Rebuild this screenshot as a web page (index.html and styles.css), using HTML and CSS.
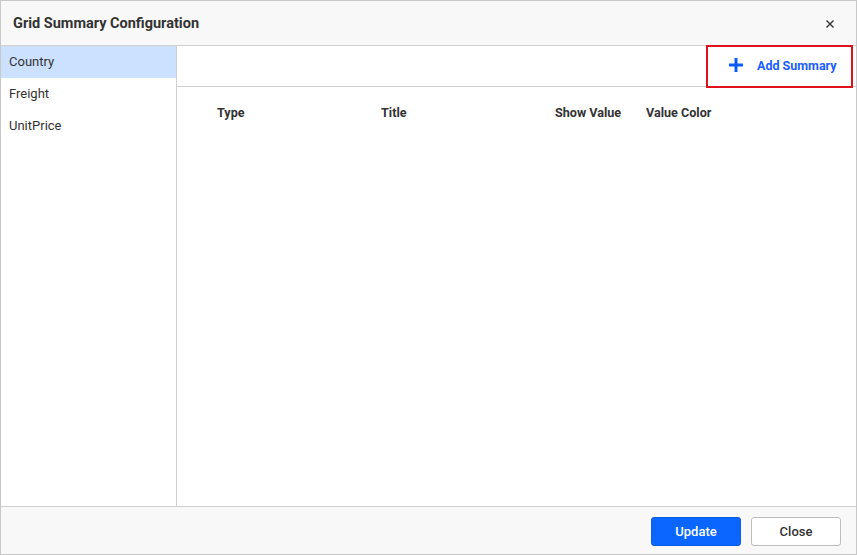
FILE: index.html
```html
<!DOCTYPE html>
<html>
<head>
<meta charset="utf-8">
<link rel="stylesheet" href="styles.css">
</head>
<body>
<div class="dialog">
  <div class="header">
    <span class="title">Grid Summary Configuration</span>
    <span class="close-x">
      <svg width="10" height="10" viewBox="0 0 10 10"><path d="M1.5 1.5 L8.5 8.5 M8.5 1.5 L1.5 8.5" stroke="#333" stroke-width="1.4" fill="none"/></svg>
    </span>
  </div>
  <div class="body">
    <div class="sidebar">
      <div class="item selected">Country</div>
      <div class="item">Freight</div>
      <div class="item">UnitPrice</div>
    </div>
    <div class="main">
      <div class="toolbar">
        <button class="add-btn">
          <svg width="16" height="16" viewBox="0 0 16 16"><path d="M8 1 V15 M1 8 H15" stroke="#0a5cff" stroke-width="3" fill="none"/></svg>
          <span>Add Summary</span>
        </button>
      </div>
      <div class="cols">
        <span>Type</span>
        <span>Title</span>
        <span>Show Value</span>
        <span>Value Color</span>
      </div>
    </div>
  </div>
  <div class="footer">
    <button class="btn primary">Update</button>
    <button class="btn">Close</button>
  </div>
</div>
</body>
</html>
```
FILE: styles.css
```css
* { box-sizing: border-box; }
html, body { margin: 0; padding: 0; background: #fff; }
body { font-family: Roboto, "Liberation Sans", sans-serif; color: #333; }
.dialog {
  width: 857px;
  height: 555px;
  border: 1px solid #c8c8c8;
  display: flex;
  flex-direction: column;
}
.header {
  height: 45px;
  flex: none;
  background: #f8f8f8;
  border-bottom: 1px solid #d0d0d0;
  display: flex;
  align-items: center;
  justify-content: space-between;
  padding: 0 21px 0 12px;
}
.title { font-size: 14.5px; font-weight: 700; color: #333; }
.close-x { display: flex; width: 10px; height: 10px; margin-top: 1px; }
.body { flex: 1; display: flex; min-height: 0; }
.sidebar {
  width: 176px;
  flex: none;
  border-right: 1px solid #d0d0d0;
}
.item {
  height: 32px;
  line-height: 32px;
  padding-left: 8px;
  font-size: 13px;
  color: #333;
}
.item.selected { background: #cce0ff; }
.main { flex: 1; display: flex; flex-direction: column; }
.toolbar {
  height: 41px;
  border-bottom: 1px solid #d0d0d0;
  display: flex;
  justify-content: flex-end;
}
.add-btn {
  position: relative;
  margin: -1px 3px -2px 0;
  width: 147px;
  height: 43px;
  border: 2px solid #e0101c;
  background: transparent;
  display: flex;
  align-items: center;
  padding: 0 0 3px 20px;
  gap: 13px;
  font-family: inherit;
  font-size: 12.5px;
  font-weight: 700;
  color: #1a5cff;
  cursor: pointer;
}
.add-btn svg { flex: none; }
.cols {
  display: grid;
  grid-template-columns: 164px 174px 91px auto;
  padding: 18px 0 0 40px;
  font-size: 12.6px;
  font-weight: 700;
  color: #333;
}
.footer {
  height: 48px;
  flex: none;
  background: #f8f8f8;
  border-top: 1px solid #d0d0d0;
  display: flex;
  justify-content: flex-end;
  align-items: flex-start;
  gap: 10px;
  padding: 10px 15px 0 0;
}
.btn {
  width: 90px;
  height: 29px;
  border: 1px solid #bdbdbd;
  border-radius: 3px;
  background: #fff;
  font-family: inherit;
  font-size: 13px;
  font-weight: 500;
  color: #333;
  cursor: pointer;
}
.btn.primary {
  background: #0a66ff;
  border-color: #0a5ce6;
  color: #fff;
}
```
